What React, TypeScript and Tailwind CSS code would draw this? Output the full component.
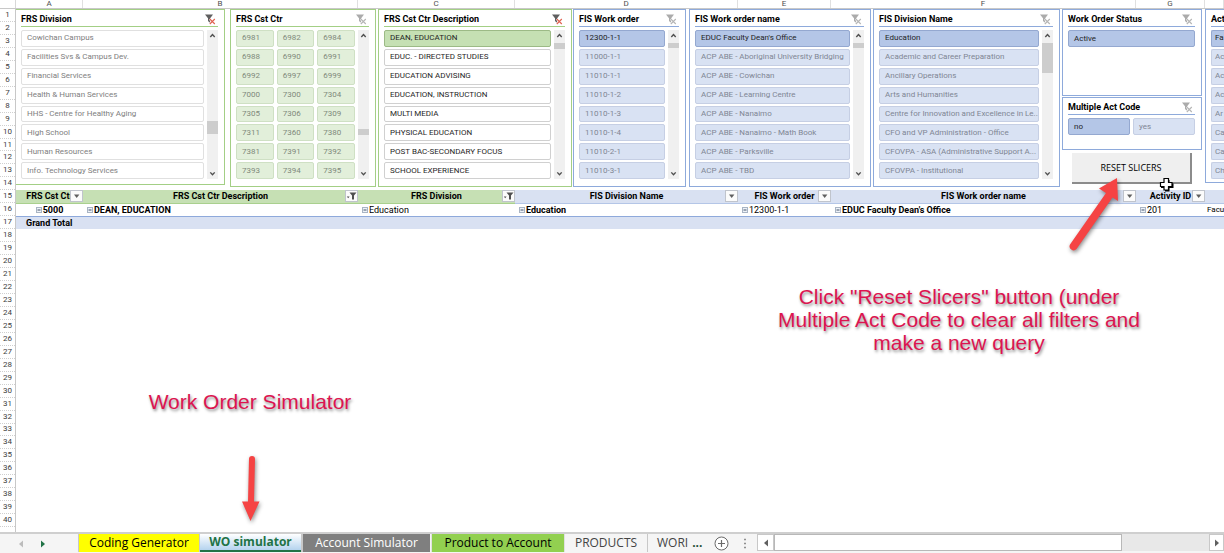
import { useState } from 'react';
import { clsx } from 'clsx';

type Tone = 'white' | 'green' | 'greenWhite' | 'blue';

interface SlicerProps {
  title: string;
  items: string[];
  tone: Tone;
  className?: string;
  selected?: string;
  filtered?: boolean;
  columns?: 1 | 2 | 3;
  thumb?: string;
  tall?: boolean;
  cut?: boolean;
}

const toneStyles: Record<Tone, { frame: string; rule: string; item: string; active: string }> = {
  white: {
    frame: 'border-[#a3cf85]',
    rule: 'border-[#a3cf85]',
    item: 'border-[#e0e0e0] bg-white text-[#808080]',
    active: '',
  },
  green: {
    frame: 'border-[#a3cf85]',
    rule: 'border-[#a3cf85]',
    item: 'border-[#cfe0c4] bg-[#e2efda] text-[#80897a]',
    active: '',
  },
  greenWhite: {
    frame: 'border-[#a3cf85]',
    rule: 'border-[#a3cf85]',
    item: 'border-[#d0d0d0] bg-white text-[#1f1f1f]',
    active: 'border-[#9cba86] bg-[#c5e0b3] text-[#1f1f1f]',
  },
  blue: {
    frame: 'border-[#8eaadb]',
    rule: 'border-[#8eaadb]',
    item: 'border-[#c6cfe4] bg-[#d9e2f3] text-[#808694]',
    active: 'border-[#94a8d0] bg-[#b4c6e7] text-[#1f1f1f]',
  },
};

const divisions = [
  'Cowichan Campus', 'Facilities Svs & Campus Dev.', 'Financial Services', 'Health & Human Services',
  'HHS - Centre for Healthy Aging', 'High School', 'Human Resources', 'Info. Technology Services',
];

const costCentres = [
  '6981', '6982', '6984', '6988', '6990', '6991', '6992', '6997', '6999', '7000', '7300', '7304',
  '7305', '7306', '7309', '7311', '7360', '7380', '7381', '7391', '7392', '7393', '7394', '7395',
];

const descriptions = [
  'DEAN, EDUCATION', 'EDUC. - DIRECTED STUDIES', 'EDUCATION ADVISING', 'EDUCATION, INSTRUCTION',
  'MULTI MEDIA', 'PHYSICAL EDUCATION', 'POST BAC-SECONDARY FOCUS', 'SCHOOL EXPERIENCE',
];

const workOrders = [
  '12300-1-1', '11000-1-1', '11010-1-1', '11010-1-2', '11010-1-3', '11010-1-4', '11010-2-1', '11010-3-1',
];

const workOrderNames = [
  "EDUC Faculty Dean's Office", 'ACP ABE - Aboriginal University Bridging', 'ACP ABE - Cowichan',
  'ACP ABE - Learning Centre', 'ACP ABE - Nanaimo', 'ACP ABE - Nanaimo - Math Book',
  'ACP ABE - Parksville', 'ACP ABE - TBD',
];

const divisionNames = [
  'Education', 'Academic and Career Preparation', 'Ancillary Operations', 'Arts and Humanities',
  'Centre for Innovation and Excellence in Le...', 'CFO and VP Administration - Office',
  'CFOVPA - ASA (Administrative Support A...', 'CFOVPA - Institutional',
];

const columnLetters = ['A', 'B', 'C', 'D', 'E', 'F', 'G', ''];

const pivotHeaders = [
  { label: 'FRS Cst Ctr', green: true, filtered: false },
  { label: 'FRS Cst Ctr Description', green: true, filtered: true },
  { label: 'FRS Division', green: true, filtered: true },
  { label: 'FIS Division Name', green: false, filtered: false },
  { label: 'FIS Work order', green: false, filtered: false },
  { label: 'FIS Work order name', green: false, filtered: false },
  { label: 'Activity ID', green: false, filtered: false },
];

const pivotRow = [
  { value: '5000', bold: true },
  { value: 'DEAN, EDUCATION', bold: true },
  { value: 'Education', bold: false },
  { value: 'Education', bold: true },
  { value: '12300-1-1', bold: false },
  { value: "EDUC Faculty Dean's Office", bold: true },
  { value: '201', bold: false },
];

const sheets = [
  { name: 'Coding Generator', style: 'w-[122px] bg-[#ffff00] text-black border-l border-r border-[#c8c8c8]' },
  { name: 'WO simulator', style: 'w-[101px] bg-gradient-to-b from-white to-[#b4d3ee] font-bold text-[#217346] border-b-2 border-[#217346]' },
  { name: 'Account Simulator', style: 'w-[129px] bg-[#7f7f7f] text-white border-l-2 border-[#c8c8c8]' },
  { name: 'Product to Account', style: 'w-[134px] ml-[1px] bg-[#92d050] text-black border-l border-r border-[#e0e0e0]' },
  { name: 'PRODUCTS', style: 'w-[83px] text-[#444444] border-r border-[#c8c8c8]' },
];

function ClearFilterIcon({ on }: { on?: boolean }) {
  return (
    <svg viewBox="0 0 11 11" className="h-[11px] w-[11px]" aria-hidden="true">
      <path d="M0 0.5h8L5.2 4.2V9L3 7V4.2z" fill={on ? '#5f5f5f' : '#ababab'} />
      <path d="M4.8 5l5 5M9.8 5l-5 5" stroke="#fff" strokeWidth="2.4" />
      <path d="M4.8 5l5 5M9.8 5l-5 5" stroke={on ? '#e0604f' : '#b5b5b5'} strokeWidth="1.1" />
    </svg>
  );
}

function Chevron({ up }: { up?: boolean }) {
  return (
    <svg viewBox="0 0 11 11" className="h-[11px] w-[11px]" aria-hidden="true">
      <path d={up ? 'M3.3 7L5.5 4.6L7.7 7' : 'M3.3 4.4L5.5 6.8L7.7 4.4'} fill="none" stroke="#505050" strokeWidth="1.4" />
    </svg>
  );
}

function ScrollTrack({ thumb }: { thumb: string }) {
  return (
    <div className="flex w-[11px] shrink-0 flex-col bg-[#f0f0f0]">
      <button aria-label="Scroll up"><Chevron up /></button>
      <div className="flex-1">
        <div className={clsx('bg-[#cdcdcd]', thumb)} />
      </div>
      <button aria-label="Scroll down"><Chevron /></button>
    </div>
  );
}

function Slicer({ title, items, tone, className, selected, filtered, columns = 1, thumb, tall = true, cut }: SlicerProps) {
  const [active, setActive] = useState(selected);
  const styles = toneStyles[tone];

  return (
    <section className={clsx('border bg-white pt-[2px] pl-[5px]', cut ? 'border-r-0' : 'pr-[6px]', styles.frame, className)}>
      <div className={clsx('flex h-[15px] items-center justify-between border-b', styles.rule)}>
        <h2 className="text-[9px] leading-3 font-bold whitespace-nowrap text-black">{title}</h2>
        {!cut && (
          <button aria-label={`Clear filter: ${title}`} className="mr-[2px]">
            <ClearFilterIcon on={filtered} />
          </button>
        )}
      </div>
      <div className={clsx('mt-[3px] flex gap-[3px]', tall && 'h-[149px]')}>
        <div
          className={clsx(
            'grid min-w-0 flex-1 gap-x-[3px] gap-y-[2px]',
            tall ? 'grid-rows-8' : 'auto-rows-[17px]',
            columns === 3 && 'grid-cols-3',
            columns === 2 && 'grid-cols-2',
            columns === 1 && 'grid-cols-1'
          )}
        >
          {items.map((item, i) => (
            <button
              key={i}
              aria-pressed={active === item}
              onClick={() => setActive(item)}
              className={clsx(
                'flex min-h-0 min-w-0 items-center overflow-hidden rounded-[2px] border text-left text-[8px] leading-3 whitespace-nowrap',
                cut ? 'rounded-r-none border-r-0 pl-[3px]' : 'pl-[5px]',
                active === item ? styles.active : styles.item
              )}
            >
              {item}
            </button>
          ))}
        </div>
        {thumb && <ScrollTrack thumb={thumb} />}
      </div>
    </section>
  );
}

function FilterButton({ label, filtered }: { label: string; filtered: boolean }) {
  return (
    <button
      aria-label={`Filter ${label}`}
      className="absolute top-0 right-0 flex h-3 w-[13px] items-center justify-center border border-[#c0c4cc] bg-[#fbfbfb]"
    >
      {filtered ? (
        <svg viewBox="0 0 11 10" className="h-[10px] w-[11px]" aria-hidden="true">
          <path d="M3.5 1.5h7L8 4.5V8.5H6V4.5z" fill="#505050" />
          <path d="M0.8 5.5h2.8L2.2 7.2z" fill="#505050" />
        </svg>
      ) : (
        <svg viewBox="0 0 11 10" className="h-[10px] w-[11px]" aria-hidden="true">
          <path d="M3 3.5h5.4L5.7 7z" fill="#606060" />
        </svg>
      )}
    </button>
  );
}

function CollapseIcon() {
  return (
    <svg viewBox="0 0 6 6" className="h-[6px] w-[6px] shrink-0" aria-hidden="true">
      <rect x="0.5" y="0.5" width="5" height="5" fill="#eef2f8" stroke="#a8b4c4" />
      <path d="M1.5 3h3" stroke="#44546a" />
    </svg>
  );
}

function PivotTable() {
  return (
    <table className="w-full table-fixed border-collapse text-[9px] leading-3 text-black">
      <colgroup>
        <col className="w-[67px]" />
        <col className="w-[275px]" />
        <col className="w-[157px]" />
        <col className="w-[223px]" />
        <col className="w-[93px]" />
        <col className="w-[305px]" />
        <col className="w-[69px]" />
        <col />
      </colgroup>
      <thead>
        <tr className="h-[13px]">
          {pivotHeaders.map((h) => (
            <th
              key={h.label}
              className={clsx(
                'relative overflow-hidden border-b p-0 pt-[1px] text-center leading-[11px] font-bold whitespace-nowrap',
                h.green ? 'border-[#a9d08e] bg-[#c6e0b4]' : 'border-[#b4c6e7] bg-[#d9e1f2]'
              )}
            >
              {h.label}
              <FilterButton label={h.label} filtered={h.filtered} />
            </th>
          ))}
          <td className="border-b border-[#b4c6e7] bg-[#d9e1f2] p-0" />
        </tr>
      </thead>
      <tbody>
        <tr className="h-[13px]">
          {pivotRow.map((cell, i) => (
            <td key={i} className="overflow-hidden p-0">
              <div className={clsx('flex items-center gap-[1px] whitespace-nowrap', i === 0 ? 'justify-center' : 'pl-1', cell.bold && 'font-bold')}>
                <CollapseIcon />
                {cell.value}
              </div>
            </td>
          ))}
          <td className="overflow-hidden p-0 pl-[2px] text-[8px]">Facu</td>
        </tr>
        <tr className="h-[13px] bg-[#d9e1f2]">
          <th scope="row" colSpan={8} className="border-t border-[#8ea9db] p-0 pl-[10px] text-left font-bold">
            Grand Total
          </th>
        </tr>
      </tbody>
    </table>
  );
}

function SheetBar() {
  const [current, setCurrent] = useState('WO simulator');

  return (
    <footer className="flex h-[21px] border-t-2 border-[#cfcfcf] bg-[#f5f5f5] font-['Open_Sans','Noto_Sans',sans-serif] text-xs">
      <div className="flex w-[78px] shrink-0 items-center">
        <button aria-label="Previous sheets" className="ml-[18px]">
          <svg viewBox="0 0 6 8" className="h-2 w-[6px]" aria-hidden="true"><path d="M5 0.5v7L1 4z" fill="#bcbcbc" /></svg>
        </button>
        <button aria-label="Next sheets" className="ml-[16px]">
          <svg viewBox="0 0 6 8" className="h-2 w-[6px]" aria-hidden="true"><path d="M1 0.5v7L5 4z" fill="#217346" /></svg>
        </button>
      </div>
      <nav aria-label="Sheets" className="flex h-[18px] shrink-0">
        {sheets.map((sheet) => (
          <button
            key={sheet.name}
            aria-current={current === sheet.name ? 'page' : undefined}
            onClick={() => setCurrent(sheet.name)}
            className={clsx('flex items-center justify-center leading-4 whitespace-nowrap', sheet.style)}
          >
            {sheet.name}
          </button>
        ))}
        <button className="pl-[9px] leading-4 text-[#444444]">WORI</button>
        <button aria-label="More sheets" className="pl-1 leading-4 font-bold text-[#1f4e38]">...</button>
      </nav>
      <button aria-label="New sheet" className="ml-3 flex h-[18px] items-center">
        <svg viewBox="0 0 15 15" className="h-[15px] w-[15px]" aria-hidden="true">
          <circle cx="7.5" cy="7.5" r="6.5" fill="#fff" stroke="#6a6a6a" />
          <path d="M4 7.5h7M7.5 4v7" stroke="#6a6a6a" strokeWidth="1.2" />
        </svg>
      </button>
      <div className="ml-[14px] flex min-w-0 flex-1">
        <svg viewBox="0 0 4 12" className="mt-1 h-3 w-1" aria-hidden="true">
          <path d="M1 1.5h2M1 5.5h2M1 9.5h2" stroke="#909090" strokeWidth="1.5" />
        </svg>
        <div className="ml-[10px] flex h-[17px] flex-1 bg-[#e8e8e8]">
          <button aria-label="Scroll left" className="flex w-[17px] items-center justify-center border border-[#c8c8c8] bg-white">
            <svg viewBox="0 0 6 8" className="h-2 w-[6px]" aria-hidden="true"><path d="M5 0.5v7L1 4z" fill="#606060" /></svg>
          </button>
          <div className="flex-1">
            <div className="h-full w-4/5 border border-[#b8b8b8] bg-white" />
          </div>
          <button aria-label="Scroll right" className="flex w-[15px] items-center justify-center border border-[#c8c8c8] bg-white">
            <svg viewBox="0 0 6 8" className="h-2 w-[6px]" aria-hidden="true"><path d="M1 0.5v7L5 4z" fill="#606060" /></svg>
          </button>
        </div>
      </div>
    </footer>
  );
}

function Annotations() {
  return (
    <div className="pointer-events-none absolute inset-0 text-center font-['Liberation_Sans',Arial,sans-serif] text-[21px] font-normal text-[#dc1450] [text-shadow:1px_2px_3px_rgba(0,0,0,0.45)]">
      <p className="absolute top-[285px] left-[760px] w-[398px] leading-[23px]">
        Click "Reset Slicers" button (under
        <br />
        Multiple Act Code to clear all filters and
        <br />
        make a new query
      </p>
      <p className="absolute top-[390px] left-[140px] w-[220px] leading-[23px]">Work Order Simulator</p>

      <svg viewBox="0 0 60 84" className="absolute top-[172px] left-[1064px] h-[84px] w-[60px] drop-shadow-[1px_2px_2px_rgba(0,0,0,0.45)]" aria-hidden="true">
        <path d="M53 6L35 16.5L42 21L6 72.5A4 4 0 0 0 12.500 77L48.500 25.500L54 29z" fill="#f54343" />
      </svg>
      <svg viewBox="0 0 26 72" className="absolute top-[453px] left-[238px] h-[72px] w-[26px] drop-shadow-[1px_2px_2px_rgba(0,0,0,0.45)]" aria-hidden="true">
        <path d="M11 6A3 3 0 0 1 17 6L16 48.500H21.500L12.500 68L4 48.500H10z" fill="#f54343" />
      </svg>

      {/* cell cursor */}
      <svg viewBox="0 0 16 16" className="absolute top-[177px] left-[1159px] h-4 w-4" aria-hidden="true">
        <path d="M6 3h4.500v3.500H14.500V11H10.500v3.500H6V11H2V6.500h4z" fill="#000" />
        <path d="M5 1.500h4.500V5.500H13V9.500H9.500V13H5V9.500H1.500V5.500H5z" fill="#fff" stroke="#000" strokeWidth="1.200" />
      </svg>
    </div>
  );
}

export default function App() {
  return (
    <div className="relative flex min-h-screen flex-col overflow-hidden bg-white font-['Roboto','Liberation_Sans',sans-serif]">
      {/* Column letters */}
      <div className="flex h-[9px] border-b border-[#c8c8c8] text-[8px] leading-[8px] text-[#505050]">
        <div className="w-4 shrink-0 border-r border-[#d8d8d8]" />
        <div className="grid flex-1 grid-cols-[67px_275px_157px_223px_93px_305px_69px_1fr]">
          {columnLetters.map((letter, i) => (
            <div key={i} className="border-r border-[#e0e0e0] text-center">{letter}</div>
          ))}
        </div>
      </div>

      <div className="flex flex-1">
        {/* Row numbers */}
        <div className="flex w-4 shrink-0 flex-col border-r border-[#c8c8c8] pb-[5px] text-[8px] leading-[10px] text-[#404040]">
          {Array.from({ length: 40 }, (_, i) => (
            <div key={i} className="flex flex-1 items-center justify-center border-b border-dotted border-[#d0d0d0]">
              {i + 1}
            </div>
          ))}
        </div>

        <main className="min-w-0 flex-1">
          <div className="flex h-[181px] items-start">
            <Slicer title="FRS Division" items={divisions} tone="white" filtered className="h-[176px] w-[209px] shrink-0 border-l-0" thumb="mt-[80px] h-[13px]" />
            <Slicer title="FRS Cst Ctr" items={costCentres} tone="green" columns={3} className="ml-[5px] h-[178px] w-[146px] shrink-0" thumb="mt-[88px] h-[6px]" />
            <Slicer title="FRS Cst Ctr Description" items={descriptions} tone="greenWhite" selected="DEAN, EDUCATION" filtered className="ml-[2px] h-[178px] w-[194px] shrink-0" thumb="mt-[2px] h-[6px]" />
            <Slicer title="FIS Work order" items={workOrders} tone="blue" selected="12300-1-1" className="ml-[1px] h-[178px] w-[113px] shrink-0" thumb="mt-[2px] h-[5px]" />
            <Slicer title="FIS Work order name" items={workOrderNames} tone="blue" selected="EDUC Faculty Dean's Office" className="ml-[3px] h-[178px] w-[182px] shrink-0" thumb="mt-[2px] h-[5px]" />
            <Slicer title="FIS Division Name" items={divisionNames} tone="blue" selected="Education" className="ml-[2px] h-[178px] w-[187px] shrink-0" thumb="mt-[2px] h-[30px]" />
            <div className="ml-[2px] flex w-[140px] shrink-0 flex-col">
              <Slicer title="Work Order Status" items={['Active']} tone="blue" selected="Active" tall={false} className="h-[87px]" />
              <Slicer title="Multiple Act Code" items={['no', 'yes']} tone="blue" selected="no" columns={2} tall={false} className="mt-[1px] h-[53px]" />
              <button className="mx-[10px] mt-[3px] h-[31px] border-r-2 border-b-2 border-[#8c8c8c] bg-[#efefef] font-['Open_Sans','Noto_Sans',sans-serif] text-[9px] leading-3 text-black">
                RESET SLICERS
              </button>
            </div>
            <Slicer title="Act" items={['Fa', 'Ac', 'Ac', 'Ac', 'Ar', 'Ca', 'Ca', 'Ch']} tone="blue" selected="Fa" cut className="ml-[3px] h-[174px] min-w-0 flex-1 overflow-hidden" />
          </div>
          <PivotTable />
        </main>
      </div>

      <SheetBar />
      <Annotations />
    </div>
  );
}
